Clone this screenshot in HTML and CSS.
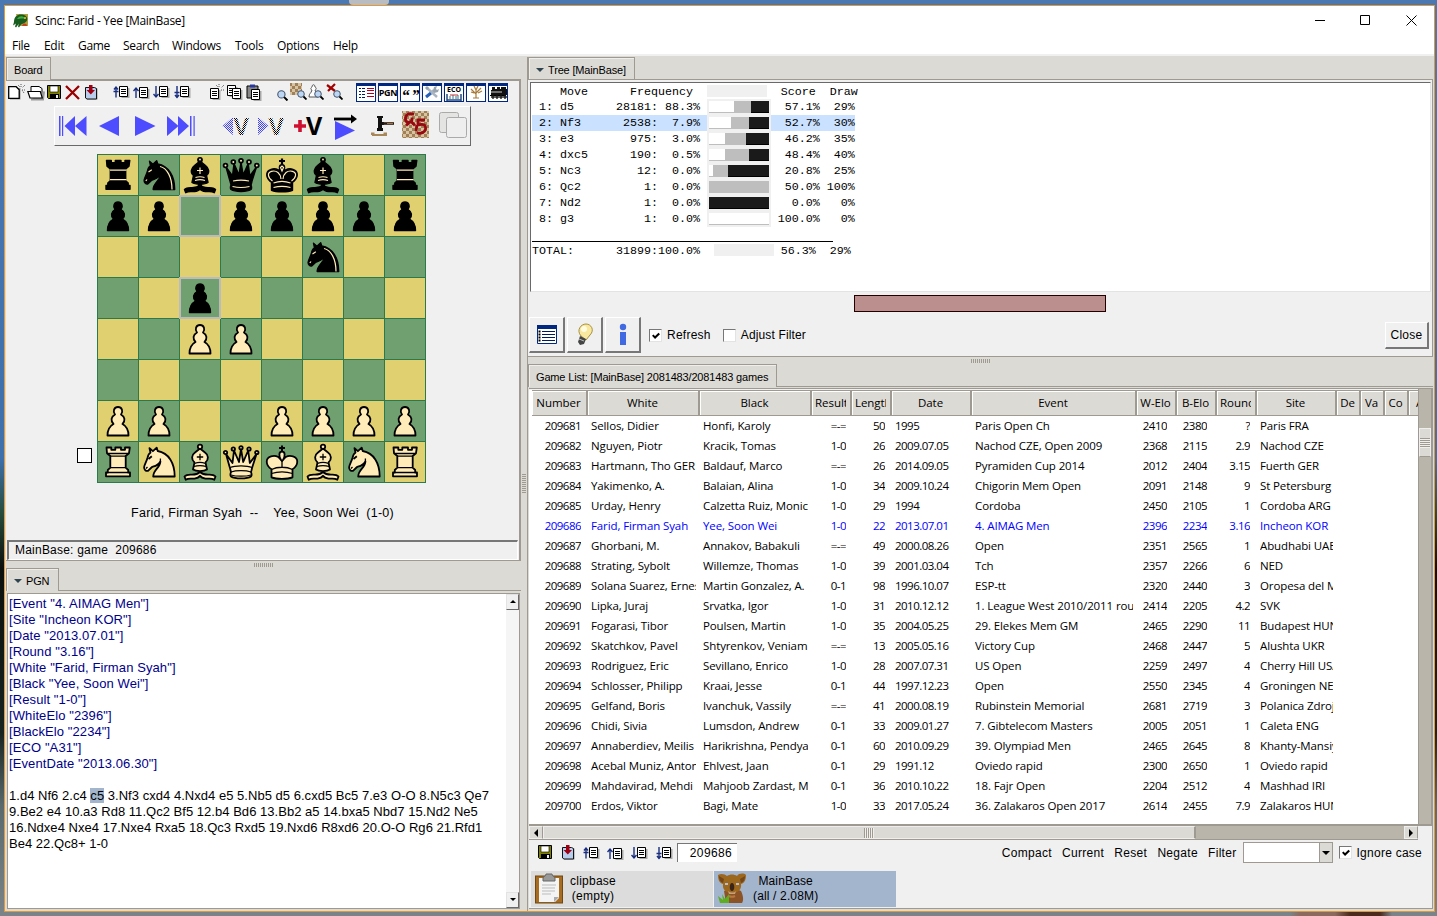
FILE: index.html
```html
<!DOCTYPE html>
<html lang="en">
<head>
<meta charset="utf-8">
<title>Scinc: Farid - Yee [MainBase]</title>
<link rel="stylesheet" href="styles.css">
</head>
<body>
<div class="desk-item"></div>
<svg width="0" height="0" class="defs">
  <defs>
    <pattern id="dotBlue" width="2" height="2" patternUnits="userSpaceOnUse"><rect width="1" height="1" fill="#4040ff"/><rect x="1" y="1" width="1" height="1" fill="#4040ff"/></pattern>
    <pattern id="dotBlack" width="2" height="2" patternUnits="userSpaceOnUse"><rect width="1" height="1" fill="#000"/><rect x="1" y="1" width="1" height="1" fill="#000"/></pattern>
    <pattern id="check" width="6" height="6" patternUnits="userSpaceOnUse"><rect width="6" height="6" fill="#d8c4a0"/><rect width="3" height="3" fill="#a08058"/><rect x="3" y="3" width="3" height="3" fill="#a08058"/></pattern>
    <symbol id="page" viewBox="0 0 11 12"><path d="M1 1h8v10H1z" transform="translate(1.5 1)" fill="#a8a8a8"/><path d="M.5.5h8v10h-8z" fill="#fff" stroke="#000"/><path d="M2 3.500h5M2 5.500h5M2 7.500h5" stroke="#000"/></symbol>
    <symbol id="disk" viewBox="0 0 15 15"><path d="M.5.5h13v13H1.500l-1-1z" fill="#808000" stroke="#000"/><path d="M3 1h8v6H3z" fill="#fff" stroke="#000" stroke-width=".6"/><path d="M3 9h9v5H3z" fill="#000"/><path d="M9 10h2v3H9z" fill="#eee"/></symbol>
    <symbol id="load" viewBox="0 0 15 15"><path d="M3 3.500h10.500v11H3z" fill="#999"/><path d="M1.500 2.500h9l2 1v10.500H3l-1.500-1z" fill="#b9cdec" stroke="#111"/><path d="M5 0h3.500v5H11L6.800 9.500 2.500 5H5z" fill="#a00010"/></symbol>
    <symbol id="first" viewBox="0 0 17 14"><path d="M3 1.500v11M1 4.500l2-2.500 2 2.500M.5 6.500h5" stroke="#1a2f80" fill="none" stroke-width="1.400"/><use href="#page" x="6" y="1" width="11" height="12"/></symbol>
    <symbol id="prev" viewBox="0 0 17 14"><path d="M3 3v10M.5 6L3 3l2.500 3" stroke="#1a2f80" fill="none" stroke-width="1.400"/><use href="#page" x="6" y="2" width="11" height="12"/></symbol>
    <symbol id="next" viewBox="0 0 17 14"><path d="M3 1v11M.5 9L3 12l2.500-3" stroke="#1a2f80" fill="none" stroke-width="1.400"/><use href="#page" x="6" y="1" width="11" height="12"/></symbol>
    <symbol id="last" viewBox="0 0 17 14"><path d="M3 1v12M.5 7.500h5M1 10l2 2.500 2-2.500" stroke="#1a2f80" fill="none" stroke-width="1.400"/><use href="#page" x="6" y="1" width="11" height="12"/></symbol>
    <symbol id="lens" viewBox="0 0 10 10"><circle cx="4" cy="4" r="3.300" fill="#bcd6f4" stroke="#44566e"/><path d="M6.500 6.500l3 3" stroke="#000" stroke-width="1.800"/></symbol>
    <symbol id="tick" viewBox="0 0 13 13"><path d="M3 5.500l2.500 2.700L10 3.700" fill="none" stroke="#000" stroke-width="2.200"/></symbol>

    <symbol id="R" viewBox="0 0 40 40"><path d="M8.500 5.500h4.800v2.300h4V5.500h5.700v2.300h4V5.500h4.800l-.8 5.700-3.300 2.800v11.700l2.500 2.300v2.500h1.800v3.800H8v-3.800h1.800V28l2.500-2.300V14L9 11.200z" class="wp"/><path d="M10 11.500h20M12.500 14.200h15M12.500 25.700h15M9.500 30.500h21" class="ln"/></symbol>
    <symbol id="r" viewBox="0 0 40 40"><path d="M8.500 5.500h4.800v2.300h4V5.500h5.700v2.300h4V5.500h4.800l-.8 5.700-3.300 2.800v11.700l2.500 2.300v2.500h1.800v3.800H8v-3.800h1.800V28l2.500-2.300V14L9 11.200z" class="bp"/><path d="M12 15.200h16.500M12 24.700h16.500" class="wl"/></symbol>
    <symbol id="N" viewBox="0 0 40 40"><path d="M10.500 6.200l3.400 3 3.800-3.500 1 3.300c11 2 17 12 17 25.500H14.200c0-7 7-8.500 7.200-15-2 4-5 4.500-8.400 5.500L9 28.800c-2 .6-4-1-3.900-3.500.2-2.500 2.600-6 3.400-9.500.4-2 1.500-4.300 3-5z" class="wp"/><path d="M9.500 17l3.300-2.700" stroke="#000" stroke-width="1.800"/><path d="M7 26.500l1.500-1.500M21.400 19.500v-3" class="ln"/></symbol>
    <symbol id="n" viewBox="0 0 40 40"><path d="M10.500 6.200l3.400 3 3.800-3.500 1 3.300c11 2 17 12 17 25.500H14.200c0-7 7-8.500 7.200-15-2 4-5 4.500-8.400 5.500L9 28.800c-2 .6-4-1-3.900-3.500.2-2.500 2.600-6 3.400-9.500.4-2 1.500-4.300 3-5z" class="bp"/><path d="M21 11.500c7 1.500 12 10.500 12 23M9.500 17l3.300-2.200M6.800 26l1.200-1.500" class="wl"/></symbol>
    <symbol id="B" viewBox="0 0 40 40"><path d="M20 30c-2.500 2.500-5 2.700-8 2.700-2.500 0-5.500-.4-7.500 1.800l1.200 3.200c3.300-2 6-.8 8.800-1.100 2.500-.3 4.500-1.200 5.500-2.800 1 1.600 3 2.500 5.500 2.800 2.800.3 5.500-.9 8.800 1.100l1.200-3.200c-2-2.200-5-1.800-7.500-1.800-3 0-5.500-.2-8-2.700z" class="wp"/><path d="M14.500 20.500c-3.500-3-3-7.500.5-10L20 6.500l5 4c3.500 2.500 4 7 .5 10L27 27.500c-3 2.200-11 2.200-14 0z" class="wp"/><circle cx="20" cy="4.800" r="2.200" class="wp"/><path d="M20 11.800v6.400M16.800 15h6.400M14.500 21.500c3-1.200 8-1.200 11 0M14 24.500c3-1 9-1 12 0" class="ln"/></symbol>
    <symbol id="b" viewBox="0 0 40 40"><path d="M20 30c-2.500 2.500-5 2.700-8 2.700-2.500 0-5.500-.4-7.500 1.800l1.200 3.200c3.300-2 6-.8 8.800-1.100 2.500-.3 4.500-1.200 5.500-2.800 1 1.600 3 2.500 5.500 2.800 2.800.3 5.500-.9 8.800 1.100l1.200-3.200c-2-2.200-5-1.800-7.500-1.800-3 0-5.500-.2-8-2.700z" class="bp"/><path d="M13.500 20.500c-3.500-3-2.500-7.500 1-10L20 6l5.500 4.500c3.500 2.500 4.500 7 1 10L28 27.500c-3 2.200-13 2.200-16 0z" class="bp"/><path d="M18 28h4v5h-4z"/><circle cx="20" cy="4.800" r="2.200" class="bp"/><circle cx="20" cy="4.500" r=".9" fill="#ffecb8"/><path d="M20 12.500v6.400M17 15.500h6M15.500 22.500c3-1 6-1 9 0M15 25.500c3-1 7-1 10 0" class="wl"/></symbol>
    <symbol id="Q" viewBox="0 0 40 40"><path d="M8.500 24.500L5 12l6.500 9 1.500-12.500 5 11.500L20 7l2.200 13 5-11.500 1.600 12.500L35.500 12l-4 12.500c-1 3-.8 4-1.500 5.500.8 2 .8 3.500 0 4.500-4 2.600-16 2.600-20 0-.8-1-.8-2.500 0-4.500-.5-1.500-.5-2.500-1.500-5.500z" class="wp"/><g class="wp"><circle cx="4.500" cy="10.500" r="1.700"/><circle cx="12.300" cy="7" r="1.700"/><circle cx="20" cy="5.800" r="1.700"/><circle cx="28" cy="7" r="1.700"/><circle cx="35.800" cy="10.500" r="1.700"/></g><path d="M9 25.500c5-2.300 17-2.300 22 0M10 30c5-1.800 15-1.800 20 0M10 33c5 1.600 15 1.600 20 0" class="ln"/></symbol>
    <symbol id="q" viewBox="0 0 40 40"><path d="M8.500 24.500L5 12l6.500 9 1.500-12.500 5 11.500L20 7l2.200 13 5-11.500 1.600 12.500L35.500 12l-4 12.500c-1 3-.8 4-1.500 5.500.8 2 .8 3.500 0 4.500-4 2.600-16 2.600-20 0-.8-1-.8-2.500 0-4.500-.5-1.500-.5-2.500-1.500-5.500z" class="bp"/><path d="M8 18l4 4 1.500-8 4.500 7L20 12l2 9 4.500-7 1.500 8 4-4-2 8H10z"/><g class="bp"><circle cx="4.500" cy="10.500" r="2.100"/><circle cx="12.300" cy="7" r="2.100"/><circle cx="20" cy="5.800" r="2.100"/><circle cx="28" cy="7" r="2.100"/><circle cx="35.800" cy="10.500" r="2.100"/></g><g fill="#ffecb8"><circle cx="4.500" cy="10.500" r="1"/><circle cx="12.300" cy="7" r="1"/><circle cx="20" cy="5.800" r="1"/><circle cx="28" cy="7" r="1"/><circle cx="35.800" cy="10.500" r="1"/></g><path d="M12 26c5-1 11-1 16 0M11.500 31.500c5 1.200 12 1.200 17 0" class="wl"/></symbol>
    <symbol id="K" viewBox="0 0 40 40"><path d="M20 3.500v6.500M17 6h6" stroke="#000" stroke-width="2"/><path d="M9.500 35.300v-8C3.500 23.500 3 16 9 14.300c4.500-1.300 8 .7 9.800 3.400-2-4-2.200-8 1.200-8s3.200 4 1.200 8c1.800-2.700 5.300-4.700 9.800-3.400 6 1.700 5.500 9.200-.5 13v8c-5 2-16 2-21 0z" class="wp"/><path d="M20 25v-5l-1.200-2.500M20 20l1.200-2.500M9.500 27.500c6-3 15-3 21 0M9.500 31.500c6-2 15-2 21 0" class="ln"/></symbol>
    <symbol id="k" viewBox="0 0 40 40"><path d="M20 3.500v6.500M17 6h6" stroke="#000" stroke-width="2.200"/><path d="M9.500 35.300v-8C3.500 23.500 3 16 9 14.300c4.500-1.300 8 .7 9.800 3.400-2-4-2.200-8 1.200-8s3.200 4 1.200 8c1.800-2.700 5.300-4.700 9.800-3.400 6 1.700 5.500 9.200-.5 13v8c-5 2-16 2-21 0z" class="bp"/><path d="M10.500 26C5.500 22.500 5 17.500 9.500 16.300c5-1.200 9 1.700 9.500 7.700M29.500 26c5-3.500 5.500-8.500 1-9.700-5-1.200-9 1.700-9.500 7.700M18.500 12.500l1.500-1.500 1.500 1.500-1.500 3.500zM11.500 28c5-2 12-2 17 0M11.500 32.500c5-1.300 12-1.300 17 0" class="wl"/></symbol>
    <symbol id="P" viewBox="0 0 40 40"><path d="M9.500 34.500c0-6 1.500-9 6-11.500-3-3-2.600-7.200 1.500-9.500-2.500-3-1-7.500 3-7.500s5.500 4.500 3 7.500c4.100 2.300 4.500 6.500 1.500 9.500 4.500 2.500 6 5.500 6 11.500z" class="wp"/></symbol>
    <symbol id="p" viewBox="0 0 40 40"><path d="M9.500 34.500c0-6 1.500-9 6-11.500-3-3-2.600-7.200 1.500-9.500-2.500-3-1-7.500 3-7.500s5.500 4.500 3 7.500c4.100 2.300 4.500 6.500 1.500 9.500 4.500 2.500 6 5.500 6 11.500z" class="bp"/></symbol>
  </defs>
</svg>

<div class="window">
  <header class="titlebar">
    <svg class="appicon" width="16" height="16" viewBox="0 0 16 16"><path d="M3 1h12v12H6z" fill="#b0a040"/><path d="M1 9c0-6 4-8 8-7.500 4 .5 6 3 5 6-1 2.500-4 3-6 4l-2 3-1-1 1-3-3 4-1-1 1-3-3 2z" fill="#185c20"/><path d="M4 6c3-4 7-3 8 0-3-1-5 0-8 0z" fill="#3fae3c"/><path d="M10 11c2-1 4 0 4 2H9z" fill="#c04020"/><circle cx="12" cy="5" r="1" fill="#f0c030"/></svg>
    <span class="title">Scinc: Farid - Yee [MainBase]</span>
    <svg class="winbtns" width="104" height="14" viewBox="0 0 104 14" fill="none" stroke="#000"><path d="M1 6.500h10M46.500 1.500h9v9h-9zM92.500 1.500l10 10M102.500 1.500l-10 10"/></svg>
  </header>
  <nav class="menubar"><span class="m1">File</span><span class="m2">Edit</span><span class="m3">Game</span><span class="m4">Search</span><span class="m5">Windows</span><span class="m6">Tools</span><span class="m7">Options</span><span>Help</span></nav>
  <main class="workspace">
    <section class="left">
      <div class="tabs"><div class="tab tab-board">Board</div></div>
      <div class="boardpane">
        <div class="toolbar">
          <svg width="18" height="17" viewBox="0 0 18 17"><path d="M2 4h10.500v11.500H2z" fill="#999"/><path d="M.7 2.700h7.500l3 3v8.600H.7z" fill="#fff" stroke="#000" stroke-width="1.300"/><path d="M13 0v3M17 1l-3 3M17 6h-3M10 1l2 2M16 9l-2-3" stroke="#555" stroke-dasharray="1 1"/></svg>
          <svg class="g1" width="18" height="17" viewBox="0 0 18 17"><path d="M4 8V2.500h8l3 2V9" fill="#fff" stroke="#000"/><path d="M4 15.500h12l1-8" fill="#999" stroke="#999" stroke-width="2"/><path d="M.8 7.500h12.500l2 6.500H3z" fill="#fff" stroke="#000" stroke-width="1.200"/></svg>
          <svg class="g2" width="15" height="15"><use href="#disk"/></svg>
          <svg class="g3" width="16" height="16" viewBox="0 0 16 16"><path d="M1 2l13 13M14 2L1 15" stroke="#980000" stroke-width="2.300"/></svg>
          <svg class="g3" width="15" height="15"><use href="#load"/></svg>
          <svg class="g14" width="17" height="14"><use href="#first"/></svg>
          <svg class="g3" width="17" height="14"><use href="#prev"/></svg>
          <svg class="g3" width="17" height="14"><use href="#next"/></svg>
          <svg class="g4" width="17" height="14"><use href="#last"/></svg>
          <svg class="g19" width="15" height="17" viewBox="0 0 15 17"><use href="#page" y="4" width="11" height="12"/><path d="M9 0v3M14 1l-3 3M14 6h-3M6 1l2 2" stroke="#555" stroke-dasharray="1 1"/></svg>
          <svg class="g2" width="17" height="16" viewBox="0 0 17 16"><use href="#page" y="1" width="11" height="12"/><use href="#page" x="5" y="4" width="11" height="12"/></svg>
          <svg class="g2" width="17" height="18" viewBox="0 0 17 18"><path d="M1 3h11v12H1z" fill="#888" stroke="#000"/><path d="M4 1.500h5v3H4z" fill="#2838a0"/><use href="#page" x="5" y="6" width="11" height="12"/></svg>
          <svg class="g14 low" width="11" height="11"><use href="#lens" width="11" height="11"/></svg>
          <svg class="g1" width="18" height="18" viewBox="0 0 18 18"><path d="M1 0h12v12H1z" fill="url(#check)"/><use href="#lens" x="8" y="7" width="10" height="10"/></svg>
          <svg class="g1" width="17" height="18" viewBox="0 0 17 18"><path d="M1 14c0-4 2-3 3-7-2-1-1-2 0-3 0-3 3-3 3 0 2 1 1 3 0 3 1 4 3 3 3 7z" fill="#fff" stroke="#555"/><use href="#lens" x="6" y="7" width="10" height="10"/></svg>
          <svg class="g1" width="17" height="18" viewBox="0 0 17 18"><path d="M1 2l8 6M9 1L2 8" stroke="#a00000" stroke-width="2.200"/><use href="#lens" x="7" y="7" width="10" height="10"/></svg>
          <span class="win first"><svg width="18" height="16" viewBox="0 0 18 16"><path d="M2 4.500h6M2 7.500h6M2 10.500h6M2 13.500h6" stroke="#001a66" stroke-dasharray="2 1 4"/><path d="M10 4.500h7M10 6.500h7M10 9.500h7M10 12.500h7" stroke="#b00020"/></svg></span>
          <span class="win"><b class="t">PGN</b></span>
          <span class="win"><b class="quo">“ ”</b></span>
          <span class="win"><svg width="18" height="16" viewBox="0 0 18 16"><path d="M4 4l10 9" stroke="#a8b4c0" stroke-width="2.400"/><path d="M3 13l5-4" stroke="#2860b8" stroke-width="3"/><path d="M8 9l3-3" stroke="#a8b4c0" stroke-width="2.500"/><path d="M10 7l1-4 3-1-1 3 1 1 2-1-1 3-4 1z" fill="#98a4b0"/><path d="M2 4l2-2 2 2-2 2z" fill="#98a4b0"/></svg></span>
          <span class="win"><span class="ecobox"><b class="eco">ECO</b><svg width="16" height="7" viewBox="0 0 16 7"><path d="M1 0v7M15 0v7M1 6h14" stroke="#2a4a78" stroke-width="1.500"/><path d="M4 2v3M7 1v4M10 2v3M12 1v4" stroke="#307888"/><path d="M4 1h8" stroke="#c03030"/></svg></span></span>
          <span class="win"><svg width="18" height="16" viewBox="0 0 18 16"><path d="M9 14V6M6 14h6M9 10L4 5M9 9l5-5M9 6L7 2M9 6l2-4M4 8l3 1M15 7l-4 2" stroke="#a87838" fill="none" stroke-width="1.200"/></svg></span>
          <span class="win"><svg width="18" height="16" viewBox="0 0 18 16"><path d="M2 6h1V3h3v2h2V3h3v2h1V3h5v2h1v6H2z" fill="#111"/><path d="M2 8h11" stroke="#fff" stroke-width=".8"/><path d="M1 11h16v1H1z"/><g fill="#555" stroke="#111"><circle cx="4" cy="13" r="1.300"/><circle cx="8" cy="13" r="1.300"/><circle cx="12" cy="13" r="1.300"/><circle cx="16" cy="13" r="1.300"/></g></svg></span>
        </div>
        <div class="navbar">
          <svg width="414" height="38" viewBox="0 0 414 38">
            <g fill="#4d4dff" stroke="none">
              <path d="M4 9h1.500v20H4zM7 9h1.200v20H7zM20 9v20L9.500 19zM31.500 9v20L20 19z"/>
              <path d="M64 9v20L44 19zM80 9v20l20.500-10z"/>
              <path d="M112 9l11.500 10L112 29zM123 9l11 10-11 10zM135 9h1.500v20H135zM138.500 9h1.200v20h-1.200z"/>
            </g>
            <path d="M178 10v18l-10.500-9zM203 10v18l10.500-9z" fill="url(#dotBlue)"/>
            <text x="178.500" y="28" class="var" fill="url(#dotBlack)">V</text><text x="213.500" y="28" class="var" fill="url(#dotBlack)">V</text>
            <path d="M239 19h12M245 13v12" stroke="#d01030" stroke-width="3.600"/><text x="251" y="28" class="varb">V</text>
            <path d="M279 12h18" stroke="#000" stroke-width="2.800"/><path d="M296 7.500l6 4.500-6 4.500z"/><path d="M280 14l20 9.500-20 9.500z" fill="#4d4dff"/>
            <path d="M322 9h6v2h-1v4h2v3h-2v3h1v3h-6v-3h1V11h-1z" fill="#111"/><path d="M328 16.500h11" stroke="#2a1a10" stroke-width="2.600"/><path d="M332 16.500h6" stroke="#a07848" stroke-width="1"/><path d="M317 28v-1.500h2.500M317 28h14v-1.500h-2.500" fill="none" stroke="#a88858" stroke-width="2"/>
            <path d="M347 4h27v27h-27z" fill="url(#check)"/>
            <path d="M359 7.500c-6-2.500-9 1-8.500 5 .5 3.500 6 4 6.500 0v-2M351 18.500l5-4 4 4M370 13h-7v5c6-2 8 .5 7.500 4-.5 3-4 5-8.500 4M362 18l-1 6" fill="none" stroke="#980810" stroke-width="2.800"/>
            <g fill="#e4e4e2" stroke="#aaa"><rect x="384.500" y="5.500" width="19" height="20" rx="2"/><rect x="391.500" y="10.500" width="20" height="20" rx="2" fill="#eee"/></g>
          </svg>
        </div>
        <div class="boardrow"><div class="side"></div><div class="board" id="board"></div></div>
        <div class="players">Farid, Firman Syah&nbsp; --&nbsp; &nbsp; Yee, Soon Wei&nbsp; (1-0)</div>
        <div class="status">MainBase: game&nbsp; 209686</div>
      </div>
      <div class="hsash"><i class="grip"></i></div>
      <div class="tabs"><div class="tab tab-pgn"><i class="tri"></i>PGN</div></div>
      <div class="pgnpane">
        <div class="pgntext"><div class="tags">[Event "4. AIMAG Men"]<br>[Site "Incheon KOR"]<br>[Date "2013.07.01"]<br>[Round "3.16"]<br>[White "Farid, Firman Syah"]<br>[Black "Yee, Soon Wei"]<br>[Result "1-0"]<br>[WhiteElo "2396"]<br>[BlackElo "2234"]<br>[ECO "A31"]<br>[EventDate "2013.06.30"]</div><div class="moves">1.d4 Nf6 2.c4 <mark>c5</mark> 3.Nf3 cxd4 4.Nxd4 e5 5.Nb5 d5 6.cxd5 Bc5 7.e3 O-O 8.N5c3 Qe7<br>9.Be2 e4 10.a3 Rd8 11.Qc2 Bf5 12.b4 Bd6 13.Bb2 a5 14.bxa5 Nbd7 15.Nd2 Ne5<br>16.Ndxe4 Nxe4 17.Nxe4 Rxa5 18.Qc3 Rxd5 19.Nxd6 R8xd6 20.O-O Rg6 21.Rfd1<br>Be4 22.Qc8+ 1-0</div></div>
        <div class="wscroll"><i class="wbtn up"></i><i class="wbtn down"></i></div>
      </div>
    </section>
    <div class="vsash"><i class="vgrip"></i></div>
    <section class="right">
      <div class="tabs"><div class="tab tab-tree"><i class="tri"></i>Tree [MainBase]</div></div>
      <div class="treepane">
        <div class="tree" id="tree"></div>
        <div class="progress"><div class="bar"></div></div>
        <div class="treebtns">
          <span class="btn"><svg width="20" height="19" viewBox="0 0 20 19"><path d="M.5.5h19v18H.5z" fill="#fff" stroke="#002880"/><path d="M0 0h20v4H0z" fill="#002880"/><path d="M5 6.500h13M5 9.500h13M5 12.500h13M5 15.500h13" stroke="#001a60"/><path d="M2.500 5.500v12" stroke="#000" stroke-width="2" stroke-dasharray="2 1"/></svg></span>
          <span class="btn"><svg width="18" height="24" viewBox="0 0 18 24"><path d="M5 13C0 7 5 1 10 1s9 6 4 11l-4 5z" fill="#f8e8a0" stroke="#a89040"/><circle cx="8" cy="6" r="3" fill="#fffce0"/><path d="M4 13l6 3-2 5-4 1-2-3z" fill="#444"/><path d="M3 16l5 2" stroke="#bbb"/></svg></span>
          <span class="btn"><svg width="8" height="24" viewBox="0 0 8 24"><circle cx="4" cy="4" r="3.200" fill="#4169e1"/><path d="M1 9h6v13H1z" fill="#4169e1"/></svg></span>
          <span class="cb"><svg width="13" height="13"><use href="#tick"/></svg></span><span class="lbl">Refresh</span>
          <span class="cb c2"></span><span class="lbl">Adjust Filter</span>
          <span class="close">Close</span>
        </div>
      </div>
      <div class="hsash"><i class="grip"></i></div>
      <div class="tabs"><div class="tab tab-list">Game List: [MainBase] 2081483/2081483 games</div></div>
      <div class="listpane">
        <div class="listrow">
          <div class="list"><div class="row head" id="head"></div><div id="rows"></div></div>
          <div class="vscroll"><i class="thumb"></i></div>
        </div>
        <div class="hscroll"><i class="sb"></i><i class="slider"><i class="vlines"></i></i><i class="sb end"></i></div>
        <div class="listtools">
          <svg width="15" height="15"><use href="#disk"/></svg>
          <svg class="g8" width="15" height="15"><use href="#load"/></svg>
          <svg class="g7" width="17" height="14"><use href="#first"/></svg>
          <svg class="g7" width="17" height="14"><use href="#prev"/></svg>
          <svg class="g7" width="17" height="14"><use href="#next"/></svg>
          <svg class="g8" width="17" height="14"><use href="#last"/></svg>
          <span class="entry">209686</span>
          <span class="links"><span>Compact</span><span>Current</span><span>Reset</span><span>Negate</span><span>Filter</span></span>
          <span class="combo"><i></i></span>
          <span class="cb"><svg width="13" height="13"><use href="#tick"/></svg></span><span class="lbl ic">Ignore case</span>
        </div>
        <div class="bases">
          <div class="base"><svg width="28" height="31" viewBox="0 0 28 31"><rect x=".5" y="3" width="27" height="27" fill="#a86c20" stroke="#704810"/><path d="M4 5h20v20l-4 4H4z" fill="#f4f4f4"/><path d="M19 29v-5h5z" fill="#aaa"/><path d="M8 5c0-2 3-1 3-4h6c0 3 3 2 3 4v3H8z" fill="#999" stroke="#666"/><path d="M7 12h14M7 15h13M7 18h13M7 21h9" stroke="#bbb"/></svg><div>clipbase<br>(empty)</div></div>
          <div class="base sel"><svg width="30" height="31" viewBox="0 0 30 31"><path d="M7 18c4-2 13-2 17 0 2 4 3 9 1 12H9z" fill="#8c5426"/><path d="M1 2c3-2 7-1 9 1 3-2 7-2 10 0 2-3 7-3 9-1 0 4-1 8-5 9 1 6-4 9-9 9S5 17 6 11C2 10 1 6 1 2z" fill="#9c681e"/><path d="M2 3l5 3-1 4C3 9 2 6 2 3zM28 3l-5 3 1 4c3-1 4-4 4-7z" fill="#744618"/><path d="M15 10c3 0 3 8 0 8s-3-8 0-8z" fill="#3a2418"/><path d="M8 10h3v2H8zM19 10h3v2h-3z" fill="#b8bcd0"/><path d="M11 18c3 2 6 2 8 0l-1 3h-6z" fill="#c8a078"/><path d="M12 23c2 1 4 1 6 0" stroke="#b87840" fill="none" stroke-width="2"/><path d="M1 23l5 4-1-6 3 5 4-5v9H3z" fill="#5cae20"/></svg><div>MainBase<br>(all / 2.08M)</div></div>
        </div>
      </div>
    </section>
  </main>
</div>
<script src="app.js"></script>
</body>
</html>
```
FILE: styles.css
```css
* { box-sizing: border-box; }
html, body { margin: 0; height: 100%; overflow: hidden; }
body {
  padding: 5px 2px 4px 4px;
  font: 12px/16px "Liberation Sans", Arial, sans-serif;
  color: #000;
  background:
    linear-gradient(90deg, transparent 1290px, #8c6a5e 1300px 1335px, #4c2a1c 1350px 1380px, transparent 1392px) bottom / 100% 4px no-repeat,
    linear-gradient(180deg, #4b78b0 0, #3f70ac 50%, #284c3c 56%, #0c100c 62%, #182420 80%, #5a6a6c 88%, #7b8488 100%);
}
.desk-item { position: absolute; left: 349px; top: 0; width: 40px; height: 5px; background: #b9bdc2; border-radius: 0 0 4px 4px; }
.defs { position: absolute; }
i { font-style: normal; display: block; }
svg { display: block; flex: none; }
.window { width: 1431px; height: 907px; border: 1px solid #e49a34; background: #fff; display: flex; flex-direction: column; position: relative; }

.titlebar { height: 29px; display: flex; align-items: center; padding: 0 16px 0 8px; font: 12px "Open Sans", sans-serif; }
.title { margin-left: 6px; letter-spacing: -.31px; flex: 1; white-space: nowrap; }
.menubar { height: 19px; display: flex; padding-left: 7px; font: 12px/22px "Open Sans", sans-serif; letter-spacing: -.3px; }
.m1 { width: 32px; } .m2 { width: 34px; } .m3 { width: 45px; } .m4 { width: 49px; } .m5 { width: 63px; } .m6 { width: 42px; } .m7 { width: 56px; }

.workspace { flex: 1; display: flex; background: #dcdad5; border-top: 2px solid #f0f0f0; padding-top: 1px; min-height: 0; }
.left { width: 516px; display: flex; flex-direction: column; padding-left: 1px; }
.vsash { width: 7px; display: flex; align-items: center; border-right: 1px solid #9e9a91; }
.vgrip { width: 4px; height: 20px; margin-left: 1px; background: repeating-linear-gradient(#9e9a91 0 1px, #dcdad5 1px 2px); }
.right { flex: 1; display: flex; flex-direction: column; min-width: 0; padding-right: 1px; }

.tabs { height: 23px; display: flex; border-bottom: 1px solid #9e9a91; flex: none; }
.tab { height: 23px; display: flex; align-items: center; padding: 2px 7px 0; border: 1px solid #9e9a91; border-bottom: 0; background: #dcdad5; font-size: 11px; letter-spacing: -.16px; white-space: nowrap; box-shadow: inset 1px 1px #efeeeb; }
.tri { border: 4px solid transparent; border-top: 4px solid #2e4450; border-bottom: 0; margin-right: 4px; }
.tab-board { width: 45px; }
.tab-pgn { width: 53px; }
.tab-tree { width: 107px; }
.tab-list { width: 249px; }

.boardpane { height: 481px; background: #f0f0f0; border: 1px solid #9e9a91; border-width: 1px 2px 1px 0; display: flex; flex-direction: column; flex: none; }
.toolbar { height: 22px; display: flex; align-items: center; padding-left: 2px; }
.g1 { margin-left: 1px; } .g2 { margin-left: 2px; } .g3 { margin-left: 3px; } .g4 { margin-left: 4px; } .g7 { margin-left: 7px; } .g8 { margin-left: 8px; }
.g14 { margin-left: 14px; } .g19 { margin-left: 19px; } .low { margin-top: 6px; }
.win { width: 20px; height: 19px; margin-left: 2px; border: 1px solid #002880; border-top-width: 3px; background: #fff; flex: none; display: flex; align-items: center; justify-content: center; }
.win svg { margin-top: -2px; }
.win.first { margin-left: 13px; }
.t { font: bold 9px/12px "Open Sans", sans-serif; letter-spacing: -.3px; }
.quo { font: bold italic 16px/16px "Liberation Serif", serif; height: 10px; letter-spacing: -1px; }
.ecobox { display: flex; flex-direction: column; align-items: center; }
.ecobox svg { margin: 0; }
.eco { font: bold 7px/8px "Open Sans", sans-serif; }
.navbar { width: 417px; height: 40px; margin: 3px 0 0 48px; border: 1px solid #fff; border-right-color: #696969; border-bottom-color: #696969; flex: none; }
.var { font: bold 23px "Liberation Sans", sans-serif; }
.varb { font: bold 25px "Open Sans", sans-serif; }
.boardrow { display: flex; margin: 8px 0 0 71px; }
.side { width: 15px; height: 15px; border: 1px solid #000; background: #fff; margin: 294px 5px 0 0; }
.board { width: 329px; height: 329px; padding: 1px 0 0 1px; background: #2c7a4c; display: grid; grid-template: repeat(8, 41px) / repeat(8, 41px); }
.sq { width: 40px; height: 40px; }
.light { background: #e0d070; } .dark { background: #70a070; }
.mark { box-shadow: 0 0 0 1px #bbb, inset 0 0 0 1px #bbb; }
.wp { fill: #ffecb8; stroke: #000; stroke-width: 1.8; stroke-linejoin: round; }
.bp { fill: #000; stroke: #000; stroke-width: 1.4; stroke-linejoin: round; }
.ln { fill: none; stroke: #000; stroke-width: 1.3; }
.wl { fill: none; stroke: #ffecb8; stroke-width: 1.2; }
.players { margin: 22px 0 0 0; text-align: center; font-size: 12.5px; letter-spacing: .27px; height: 16px; white-space: pre; }
.status { margin: 19px 1px 0 1px; height: 20px; border: 2px solid #777; border-right: 1px solid #fff; border-bottom: 1px solid #fff; padding: 0 6px; line-height: 17px; letter-spacing: .22px; }

.hsash { height: 7px; display: flex; align-items: center; justify-content: center; flex: none; }
.grip { width: 20px; height: 4px; background: repeating-linear-gradient(90deg, #9e9a91 0 1px, #dcdad5 1px 2px); }
.pgnpane { flex: 1; margin: 2px 1px 2px 1px; border: 1px solid #9e9a91; background: #fff; display: flex; }
.pgntext { flex: 1; padding: 2px 0 0 1px; font-size: 13px; line-height: 16px; white-space: nowrap; }
.tags { color: #00008b; margin-bottom: 16px; letter-spacing: .1px; }
.moves { letter-spacing: .03px; }
mark { background: #a2b5cd; color: inherit; }
.wscroll { width: 13px; background: #f5f5f5; display: flex; flex-direction: column; justify-content: space-between; }
.wbtn { width: 13px; height: 16px; background: #f0f0f0; border: 1px solid #e3e3e3; border-right-color: #696969; border-bottom-color: #696969; padding: 5px 2px; }
.wbtn::before { content: ""; display: block; width: 0; border: 3px solid transparent; border-top: 0; border-bottom: 3px solid #000; margin-left: 1px; }
.down::before { border-bottom: 0; border-top: 3px solid #000; }

.treepane { height: 278px; border: 1px solid #9e9a91; border-left: 0; background: #f0f0f0; flex: none; padding: 0 1px; margin-top: -1px; }
.tree { height: 210px; margin: 2px 0 0 1px; background: #fff; border: 1px solid #696969; border-right-color: #e3e3e3; border-bottom-color: #e3e3e3; padding: 1px 0 0 1px; font: 11.667px/16px "Liberation Mono", monospace; white-space: pre; }
.ln1 { height: 16px; display: flex; width: 323px; }
.ln1.heading { height: 15px; }
.ln1.hot { background: #cae1ff; }
.rule { width: 301px; height: 1px; background: #000; margin: 14px 0 1px; }
.blank { width: 60px; height: 12px; background: #f0f0f0; margin-top: 1px; flex: none; }
.wdl { width: 64px; height: 16px; background: #f0f0f0; padding: 2px; display: flex; flex: none; }
.wdl i { height: 12px; box-shadow: inset 0 -1px #bebebe; }
.w { background: #fff; } .d { background: #bebebe; } .l { background: #1a1a1a; flex: 1; box-shadow: inset 0 -1px #000 !important; }
.progress { height: 17px; margin: 3px 0 0 325px; }
.bar { width: 252px; height: 17px; background: #bc8f8f; border: 1px solid #200; }
.treebtns { height: 38px; margin: 4px 0 0 0; display: flex; align-items: center; }
.btn { width: 36px; height: 36px; margin-right: 2px; border: 1px solid #fff; border-right: 2px solid #777; border-bottom: 2px solid #777; display: flex; align-items: center; justify-content: center; }
.cb { width: 13px; height: 13px; background: #fff; border: 1px solid #777; border-right-color: #e3e3e3; border-bottom-color: #e3e3e3; margin: 0 5px 0 6px; }
.cb svg { width: 12px; height: 12px; }
.c2 { margin-left: 12px; }
.lbl { letter-spacing: .14px; white-space: nowrap; }
.lbl:nth-of-type(5) { letter-spacing: .25px; }
.close { margin: 0 2px 0 auto; width: 44px; height: 27px; border: 1px solid #fff; border-right: 2px solid #777; border-bottom: 2px solid #777; text-align: center; line-height: 24px; letter-spacing: .25px; }

.listpane { flex: 1; margin: 1px 0 2px 1px; border: 1px solid #9e9a91; border-left: 0; background: #f0f0f0; display: flex; flex-direction: column; min-height: 0; }
.listrow { display: flex; height: 437px; border-bottom: 2px solid #9e9a91; flex: none; }
.list { width: 889px; background: #fff; overflow: hidden; padding-left: 3px; border-top: 1px solid #f0f0f0; }
.row { display: grid; grid-template-columns: 56px 112px 112px 40px 40px 80px 165px 40px 40px 40px 80px 24px 24px 24px 24px; height: 20px; font: 11.5px/20px "Open Sans", sans-serif; width: 901px; }
.row > span { padding: 0 4px 0 3px; }
.row span span { display: block; overflow: hidden; white-space: pre; }
.txt { letter-spacing: -.11px; }
.num { letter-spacing: -.52px; }
.r { text-align: right; }
.row > span.c { text-align: right; padding-right: 6px; }
.row > span.n0 { padding-right: 7px; }
.row > span.pr { padding-right: 7px; }
.row > span.el { padding-right: 10px; }
.cur { color: #0000ff; }
.head { height: 26px; background: #dcdad5; border-top: 1px solid #9e9a91; border-bottom: 1px solid #9e9a91; line-height: 24px; text-align: center; }
.head > span { border-right: 2px solid #9e9a91; box-shadow: inset 1px 1px #fff; letter-spacing: -.05px; }
.vscroll { width: 14px; background: #bab5ab; padding-top: 39px; border: 1px solid #9e9a91; border-width: 0 1px; }
.thumb { height: 29px; background: #dcdad5 repeating-linear-gradient(#9e9a91 0 1px, #f0efec 1px 2px) center / 10px 10px no-repeat; border: 1px solid #eee; border-bottom-color: #9e9a91; }
.hscroll { width: 889px; height: 14px; background: #bab5ab; display: flex; border-bottom: 1px solid #9e9a91; flex: none; }
.sb { width: 14px; background: #dcdad5; border: 1px solid #eee; border-right: 1px solid #9e9a91; padding: 2px 4px; }
.sb::before { content: ""; display: block; width: 0; border: 4px solid transparent; border-left: 0; border-right: 4px solid #000; }
.end { margin-left: auto; }
.end::before { border-right: 0; border-left: 4px solid #000; }
.slider { width: 653px; background: #dcdad5; border: 1px solid #eee; border-right: 2px solid #9e9a91; display: flex; justify-content: center; align-items: center; }
.vlines { width: 10px; height: 10px; background: repeating-linear-gradient(90deg, #9e9a91 0 1px, #f0efec 1px 2px); }
.listtools { height: 25px; display: flex; align-items: center; padding: 0 10px 0 9px; flex: none; }
.entry { margin-left: 4px; width: 60px; height: 19px; border: 1px solid #777; border-right: 0; border-bottom: 0; background: #fff; text-align: right; padding-right: 5px; line-height: 18px; letter-spacing: .35px; }
.links { margin-left: auto; display: flex; gap: 10.2px; letter-spacing: .3px; }
.combo { width: 90px; height: 21px; margin: 0 0 0 6px; border: 1px solid #9e9a91; background: #fff; display: flex; justify-content: flex-end; }
.combo i { width: 13px; background: #dcdad5; border-left: 1px solid #9e9a91; padding: 8px 2px; }
.combo i::before { content: ""; display: block; width: 0; border: 4px solid transparent; border-top: 4px solid #000; border-bottom: 0; }
.ic { letter-spacing: .25px; }
.bases { display: flex; margin: 6px 0 0 2px; gap: 1px; }
.base { width: 182px; height: 36px; background: #dcdcdc; padding: 3px 4px 2px; display: flex; gap: 7px; text-align: center; line-height: 15px; letter-spacing: .25px; }
.base svg { margin-top: -1px; }
.sel { background: #a3b4cd; padding-left: 3px; gap: 6px; letter-spacing: .15px; }
```
FILE: app.js
```javascript
// Position on the board, rank 8 first.
const position = ["rnbqkb.r", "pp.ppppp", ".....n..", "..p.....", "..PP....", "........", "PP..PPPP", "RNBQKBNR"];
const marked = ["1,2", "3,2"];
document.getElementById("board").innerHTML = position.map((rank, y) => [...rank].map((p, x) =>
  `<div class="sq ${(x + y) % 2 ? "dark" : "light"}${marked.includes(y + "," + x) ? " mark" : ""}">${p === "." ? "" : `<svg width="40" height="40"><use href="#${p}"/></svg>`}</div>`
).join("")).join("");

// Opening tree: move, games, frequency, white and draw widths, score, draws.
const tree = [
  ["d5", "28181", "88.3", 25, 17, "57.1", "29"], ["Nf3", "2538", "7.9", 22, 18, "52.7", "30"],
  ["e3", "975", "3.0", 16, 21, "46.2", "35"], ["dxc5", "190", "0.5", 16, 24, "48.4", "40"],
  ["Nc3", "12", "0.0", 4, 15, "20.8", "25"], ["Qc2", "1", "0.0", 0, 60, "50.0", "100"],
  ["Nd2", "1", "0.0", 0, 0, "0.0", "0"], ["g3", "1", "0.0", 60, 0, "100.0", "0"]
];
document.getElementById("tree").innerHTML =
  `<div class="ln1 heading">    Move      Frequency  <i class="blank"></i>  Score  Draw</div>` +
  tree.map((t, i) => `<div class="ln1${i === 1 ? " hot" : ""}"> ${i + 1}: ${t[0].padEnd(6)}${t[1].padStart(7)}:${t[2].padStart(5)}% <span class="wdl"><i class="w" style="width:${t[3]}px"></i><i class="d" style="width:${t[4]}px"></i><i class="l"></i></span>${t[5].padStart(6)}%${t[6].padStart(4)}%</div>`).join("") +
  `<div class="rule"></div><div class="ln1 total">TOTAL:      31899:100.0%  <i class="blank"></i> 56.3%  29%</div>`;

const heads = ["Number", "White", "Black", "Result", "Length", "Date", "Event", "W-Elo", "B-Elo", "Round", "Site", "De", "Va", "Co", "A"];
document.getElementById("head").innerHTML = heads.map(h => `<span><span>${h}</span></span>`).join("");

const games = `Sellos, Didier|Honfi, Karoly|=-=|50|1995|Paris Open Ch|2410|2380|?|Paris FRA
Nguyen, Piotr|Kracik, Tomas|1-0|26|2009.07.05|Nachod CZE, Open 2009|2368|2115|2.9|Nachod CZE
Hartmann, Tho GER|Baldauf, Marco|=-=|26|2014.09.05|Pyramiden Cup 2014|2012|2404|3.15|Fuerth GER
Yakimenko, A.|Balaian, Alina|1-0|34|2009.10.24|Chigorin Mem Open|2091|2148|9|St Petersburg
Urday, Henry|Calzetta Ruiz, Monica|1-0|29|1994|Cordoba|2450|2105|1|Cordoba ARG
Farid, Firman Syah|Yee, Soon Wei|1-0|22|2013.07.01|4. AIMAG Men|2396|2234|3.16|Incheon KOR
Ghorbani, M.|Annakov, Babakuli|=-=|49|2000.08.26|Open|2351|2565|1|Abudhabi UAE
Strating, Sybolt|Willemze, Thomas|1-0|39|2001.03.04|Tch|2357|2266|6|NED
Solana Suarez, Ernesto|Martin Gonzalez, A.|0-1|98|1996.10.07|ESP-tt|2320|2440|3|Oropesa del Mar
Lipka, Juraj|Srvatka, Igor|1-0|31|2010.12.12|1. League West 2010/2011 round|2414|2205|4.2|SVK
Fogarasi, Tibor|Poulsen, Martin|1-0|35|2004.05.25|29. Elekes Mem GM|2465|2290|11|Budapest HUN
Skatchkov, Pavel|Shtyrenkov, Veniamin|=-=|13|2005.05.16|Victory Cup|2468|2447|5|Alushta UKR
Rodriguez, Eric|Sevillano, Enrico|1-0|28|2007.07.31|US Open|2259|2497|4|Cherry Hill USA
Schlosser, Philipp|Kraai, Jesse|0-1|44|1997.12.23|Open|2550|2345|4|Groningen NED
Gelfand, Boris|Ivanchuk, Vassily|=-=|41|2000.08.19|Rubinstein Memorial|2681|2719|3|Polanica Zdroj
Chidi, Sivia|Lumsdon, Andrew|0-1|33|2009.01.27|7. Gibtelecom Masters|2005|2051|1|Caleta ENG
Annaberdiev, Meilis|Harikrishna, Pendyala|0-1|60|2010.09.29|39. Olympiad Men|2465|2645|8|Khanty-Mansiysk
Acebal Muniz, Antonio|Ehlvest, Jaan|0-1|29|1991.12|Oviedo rapid|2300|2650|1|Oviedo rapid
Mahdavirad, Mehdi|Mahjoob Zardast, M|0-1|36|2010.10.22|18. Fajr Open|2204|2512|4|Mashhad IRI
Erdos, Viktor|Bagi, Mate|1-0|33|2017.05.24|36. Zalakaros Open 2017|2614|2455|7.9|Zalakaros HUN`;
const kinds = ["num r n0", "txt", "txt", "num c", "num r pr", "num", "txt", "num r el", "num r el", "num r pr", "txt"];
document.getElementById("rows").innerHTML = games.split("\n").map((g, i) => {
  const cells = [209681 + i, ...g.split("|")];
  return `<div class="row${i === 5 ? " cur" : ""}">${cells.map((c, k) => `<span class="${kinds[k]}"><span>${c}</span></span>`).join("")}</div>`;
}).join("");
```
